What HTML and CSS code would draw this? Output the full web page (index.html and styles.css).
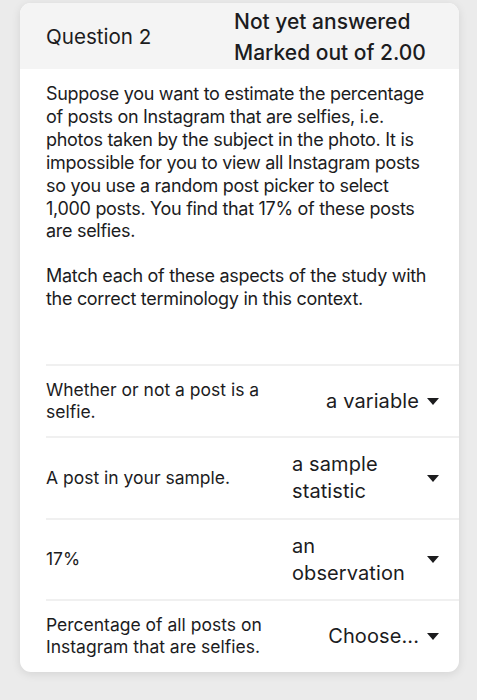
FILE: index.html
```html
<!DOCTYPE html>
<html>
<head>
<meta charset="utf-8">
<link rel="stylesheet" href="styles.css">
</head>
<body>
<div class="card">
  <div class="card-head">
    <div class="qno">Question 2</div>
    <div class="status">
      <div>Not yet answered</div>
      <div>Marked out of 2.00</div>
    </div>
  </div>
  <div class="card-body">
    <p class="qtext">Suppose you want to estimate the percentage of posts on Instagram that are selfies, i.e. photos taken by the subject in the photo. It is impossible for you to view all Instagram posts so you use a random post picker to select 1,000 posts. You find that 17% of these posts are selfies.</p>
    <p class="qtext">Match each of these aspects of the study with the correct terminology in this context.</p>
  </div>
  <div class="matches">
    <div class="row r1">
      <div class="stem">Whether or not a post is a selfie.</div>
      <div class="sel"><span class="val">a variable</span><svg class="caret" viewBox="0 0 12 7"><path d="M0 0H12L6 7Z"/></svg></div>
    </div>
    <div class="row r2">
      <div class="stem">A post in your sample.</div>
      <div class="sel"><span class="val">a sample statistic</span><svg class="caret" viewBox="0 0 12 7"><path d="M0 0H12L6 7Z"/></svg></div>
    </div>
    <div class="row r3">
      <div class="stem">17%</div>
      <div class="sel"><span class="val">an observation</span><svg class="caret" viewBox="0 0 12 7"><path d="M0 0H12L6 7Z"/></svg></div>
    </div>
    <div class="row r4">
      <div class="stem">Percentage of all posts on Instagram that are selfies.</div>
      <div class="sel"><span class="val">Choose...</span><svg class="caret" viewBox="0 0 12 7"><path d="M0 0H12L6 7Z"/></svg></div>
    </div>
  </div>
</div>
</body>
</html>
```
FILE: styles.css
```css
html, body {
  margin: 0;
  padding: 0;
  background: #ebebeb;
}
body {
  font-family: Inter, "Noto Sans", sans-serif;
  color: #1c1c1e;
  padding-top: 3px;
  height: 700px;
  box-sizing: border-box;
}
.card {
  margin-left: 20px;
  width: 439px;
  height: 669px;
  background: #ffffff;
  border-radius: 11px;
  overflow: hidden;
  box-shadow: 0 2px 10px rgba(0,0,0,0.10);
}
.card-head {
  background: #f4f4f4;
  height: 66px;
  display: flex;
  align-items: center;
  padding-left: 26px;
}
.qno {
  font-size: 20.6px;
  width: 188px;
}
.status {
  font-size: 21px;
  font-weight: 500;
  line-height: 31px;
  margin-top: 1px;
}
.card-body {
  padding: 14px 31px 0 26px;
}
.qtext {
  margin: 0 0 22px 0;
  font-size: 18px;
  line-height: 22.9px;
  letter-spacing: -0.3px;
}
.matches {
  margin-top: 53px;
  margin-left: 26px;
}
.row {
  display: flex;
  align-items: center;
  border-top: 2px solid #f0f0f0;
  padding-right: 20px;
  box-sizing: border-box;
}
.r1 { height: 72px; }
.r2 { height: 82px; }
.r3 { height: 81px; }
.r4 { height: 72px; }
.stem {
  flex: 1;
  font-size: 17.5px;
  line-height: 22.5px;
  letter-spacing: 0;
  padding-right: 20px;
}
.sel {
  max-width: 147px;
  display: flex;
  align-items: center;
  gap: 8px;
  font-size: 20px;
  line-height: 27px;
  letter-spacing: 0.1px;
}
.val {
  flex: 1;
}
.caret {
  width: 12px;
  height: 7px;
  flex: none;
  fill: #1c1c1e;
}
```
